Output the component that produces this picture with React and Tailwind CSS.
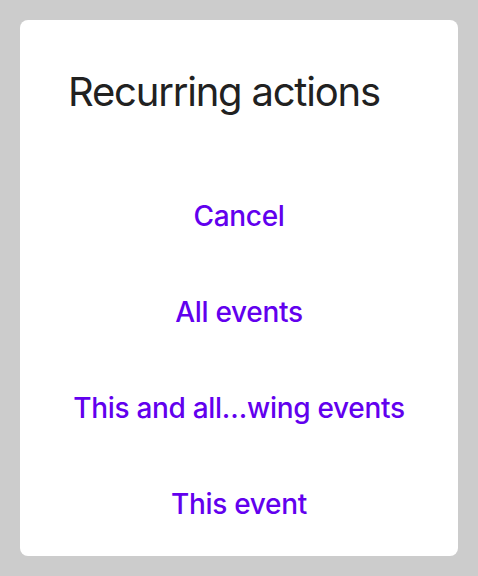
export default function App() {
  const actions = ["Cancel", "All events", "This and all…wing events", "This event"];

  return (
    <div className="min-h-screen bg-[#cccccc] p-5" style={{ fontFamily: "Inter, 'Noto Sans', sans-serif" }}>
      <div className="flex h-[536px] w-[438px] flex-col rounded-lg bg-white">
        <h2 className="pl-12 pt-12 text-[40px] font-normal leading-[48px] tracking-[-1.2px] text-[#212121]">
          Recurring actions
        </h2>
        <div className="mt-[52px] flex flex-col">
          {actions.map((label) => (
            <button
              key={label}
              className="flex h-24 items-center justify-center text-[28px] font-medium leading-[28px] tracking-[-0.3px] text-[#6200ee]"
            >
              {label}
            </button>
          ))}
        </div>
      </div>
    </div>
  );
}
